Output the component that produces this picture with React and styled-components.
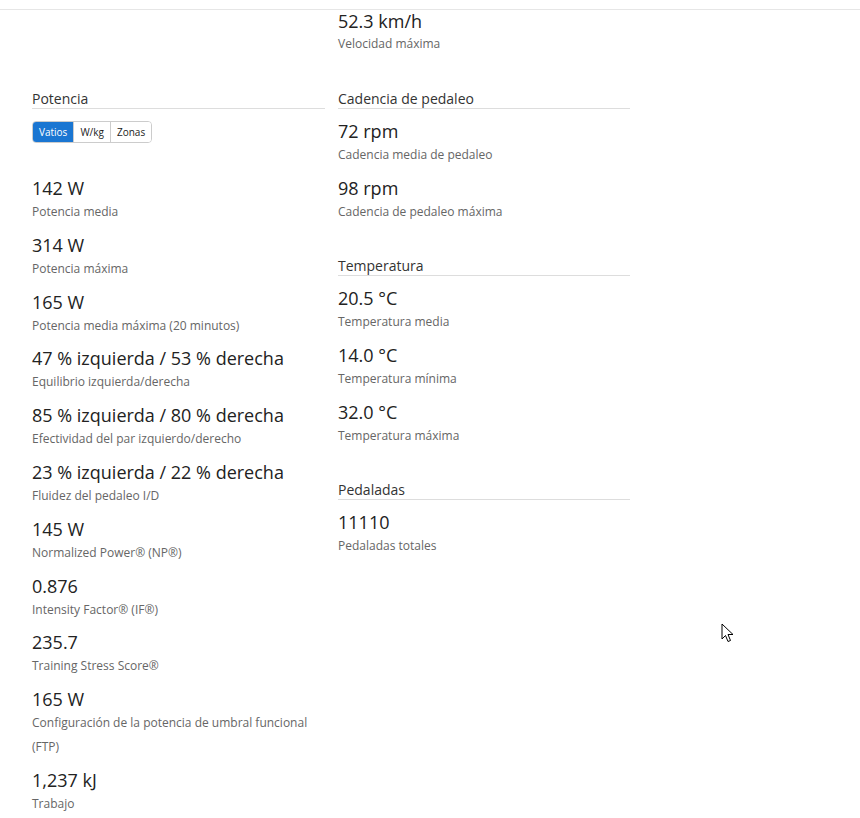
import React from 'react'
import styled, { createGlobalStyle } from 'styled-components'

const GlobalStyle = createGlobalStyle`
body {
  margin: 0;
  background: #fff;
  font-family: "Open Sans", "Noto Sans", Arial, sans-serif;
  color: #222;
}
`

const Page = styled.div`
position: relative;
width: 860px;
min-height: 818px;
overflow: hidden;
`

const TopBar = styled.div`
height: 9px;
border-bottom: 1px solid #e6e6e6;
`

const Stats = styled.div`
display: grid;
grid-template-columns: 293px 292px;
column-gap: 13px;
row-gap: 24.2px;
padding: 0 32px;
`

const Column = styled.div`
display: flex;
flex-direction: column;
`

const Section = styled.section`
display: flex;
flex-direction: column;
margin-top: ${props => (props.first ? '0' : '23.4px')};
`

const SectionTitle = styled.h3`
margin: 0 0 10px;
font-size: 14px;
font-weight: 400;
line-height: 19px;
color: #333;
border-bottom: 1px solid #ddd;
`

const Toggle = styled.div`
display: flex;
align-self: flex-start;
margin: 2px 0 33px;
border: 1px solid #ccc;
border-radius: 4px;
overflow: hidden;
`

const ToggleBtn = styled.button`
height: 20px;
margin: 0;
padding: 0 6px;
border: none;
border-left: ${props => (props.first ? 'none' : '1px solid #ccc')};
background: ${props => (props.active ? '#1a76d2' : '#fff')};
color: ${props => (props.active ? '#fff' : '#222')};
font-family: inherit;
font-size: 10px;
line-height: 20px;
cursor: pointer;
`

const Item = styled.div`
margin-bottom: 8.8px;
`

const Value = styled.div`
font-size: 18px;
line-height: ${props => (props.compact ? '22px' : '24px')};
color: #222;
`

const Label = styled.div`
font-size: 12px;
line-height: 24px;
color: #666;
`

const Cursor = styled.svg`
position: absolute;
left: 721px;
top: 623px;
`

const power = [
  ['142 W', 'Potencia media'],
  ['314 W', 'Potencia máxima'],
  ['165 W', 'Potencia media máxima (20 minutos)'],
  ['47 % izquierda / 53 % derecha', 'Equilibrio izquierda/derecha'],
  ['85 % izquierda / 80 % derecha', 'Efectividad del par izquierdo/derecho'],
  ['23 % izquierda / 22 % derecha', 'Fluidez del pedaleo I/D'],
  ['145 W', 'Normalized Power® (NP®)'],
  ['0.876', 'Intensity Factor® (IF®)'],
  ['235.7', 'Training Stress Score®'],
  ['165 W', 'Configuración de la potencia de umbral funcional (FTP)'],
  ['1,237 kJ', 'Trabajo'],
]

const sections = [
  {
    title: 'Cadencia de pedaleo',
    items: [
      ['72 rpm', 'Cadencia media de pedaleo'],
      ['98 rpm', 'Cadencia de pedaleo máxima'],
    ],
  },
  {
    title: 'Temperatura',
    items: [
      ['20.5 °C', 'Temperatura media'],
      ['14.0 °C', 'Temperatura mínima'],
      ['32.0 °C', 'Temperatura máxima'],
    ],
  },
  {
    title: 'Pedaladas',
    items: [['11110', 'Pedaladas totales']],
  },
]

function Stat({ value, label, compact }) {
  return (
    <Item>
      <Value compact={compact}>{value}</Value>
      <Label>{label}</Label>
    </Item>
  )
}

export default function App() {
  return (
    <Page>
      <GlobalStyle />
      <TopBar />
      <Stats>
        <div />
        <Column>
          <Stat compact value="52.3 km/h" label="Velocidad máxima" />
        </Column>

        <Column>
          <Section first>
            <SectionTitle>Potencia</SectionTitle>
            <Toggle>
              <ToggleBtn first active>Vatios</ToggleBtn>
              <ToggleBtn>W/kg</ToggleBtn>
              <ToggleBtn>Zonas</ToggleBtn>
            </Toggle>
            {power.map(([v, l], i) => (
              <Stat key={i} value={v} label={l} />
            ))}
          </Section>
        </Column>

        <Column>
          {sections.map((s, i) => (
            <Section key={s.title} first={i === 0}>
              <SectionTitle>{s.title}</SectionTitle>
              {s.items.map(([v, l]) => (
                <Stat key={l} value={v} label={l} />
              ))}
            </Section>
          ))}
        </Column>
      </Stats>

      <Cursor width="14" height="21" viewBox="0 0 14 21">
        <path
          d="M1 1 L1 16 L4.5 12.5 L7 18.5 L9.5 17.5 L7 11.5 L12 11.5 Z"
          fill="#fff"
          stroke="#000"
          strokeWidth="1"
          strokeLinejoin="miter"
        />
      </Cursor>
    </Page>
  )
}
